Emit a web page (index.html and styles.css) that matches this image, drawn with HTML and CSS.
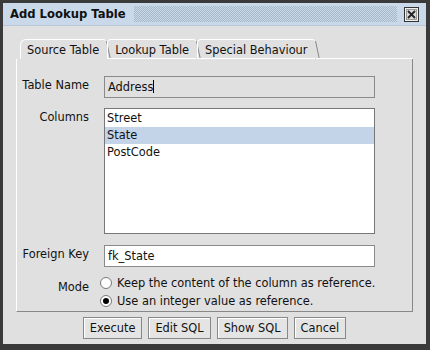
FILE: index.html
```html
<!DOCTYPE html>
<html>
<head>
<meta charset="utf-8">
<link rel="stylesheet" href="styles.css">
</head>
<body>
<div class="window">
  <div class="titlebar">
    <span class="title">Add Lookup Table</span>
    <span class="dots"></span>
    <span class="close"><svg width="15" height="15" viewBox="0 0 15 15"><rect x="0.5" y="0.5" width="14" height="14" fill="#f0f0f0" stroke="#333"/><rect x="2.5" y="2.5" width="10" height="10" fill="#d8d8d8" stroke="#999"/><path d="M4 4 L11 11 M11 4 L4 11" stroke="#222" stroke-width="1.8"/></svg></span>
  </div>
  <div class="body">
    <div class="tabs">
      <div class="tab active">Source Table</div>
      <div class="tab">Lookup Table</div>
      <div class="tab">Special Behaviour</div>
      <div class="tabfill"></div>
    </div>
    <div class="panel">
      <div class="row">
        <label class="lbl">Table Name</label>
        <div class="field disabled">Address<span class="caret"></span></div>
      </div>
      <div class="row">
        <label class="lbl">Columns</label>
        <div class="list">
          <div class="item">Street</div>
          <div class="item sel">State</div>
          <div class="item">PostCode</div>
        </div>
      </div>
      <div class="row">
        <label class="lbl">Foreign Key</label>
        <div class="field">fk_State</div>
      </div>
      <div class="row mode">
        <label class="lbl">Mode</label>
        <div class="radios">
          <div class="radio"><span class="dot"></span>Keep the content of the column as reference.</div>
          <div class="radio"><span class="dot on"></span>Use an integer value as reference.</div>
        </div>
      </div>
    </div>
    <div class="buttons">
      <button class="btn">Execute</button>
      <button class="btn">Edit SQL</button>
      <button class="btn">Show SQL</button>
      <button class="btn">Cancel</button>
    </div>
  </div>
</div>
</body>
</html>
```
FILE: styles.css
```css
html, body { margin: 0; padding: 0; }
body { width: 430px; height: 350px; overflow: hidden; background: #3c3c3c; font-family: "DejaVu Sans", Verdana, sans-serif; font-size: 11.4px; color: #111; }
.window { box-sizing: border-box; width: 430px; height: 350px; border: 3px solid #3a3a3a; border-bottom-width: 6px; border-right-width: 4px; background: #e0e0e0; display: flex; flex-direction: column; }
.titlebar { height: 22px; background: #c9d9e9; display: flex; align-items: center; padding: 0 7px 0 7px; border-bottom: 1px solid #b8c8d8; }
.title { font-weight: bold; font-size: 11.6px; color: #111; white-space: nowrap; }
.dots { flex: 1; height: 16px; margin: 0 7px 0 8px; background: repeating-conic-gradient(#9fb0c2 0 25%, transparent 0 50%) 0 0 / 2px 2px; opacity: 0.8; }
.close { display: flex; width: 15px; height: 15px; }
.body { flex: 1; display: flex; flex-direction: column; padding: 14px 13px 0 13px; }
.tabs { display: flex; height: 19px; padding-left: 4px; align-items: flex-end; }
.tab { position: relative; height: 18px; padding: 0 7px 0 7px; border-top: 1px solid #fff; border-left: 1px solid #fff; border-bottom: 1px solid #fff; border-radius: 4px 3px 0 0; color: #111; line-height: 20px; margin-right: 1px; }
.tab::after { content: ""; position: absolute; right: -1px; top: 1px; width: 1px; height: 17px; background: #888; transform: skewX(12deg); transform-origin: top; }
.tab.active { border-bottom-color: #e0e0e0; border-left-color: #fff; border-radius: 6px 3px 0 0; padding-left: 6px; }
.tabfill { flex: 1; border-bottom: 1px solid #fff; height: 0; }
.panel { flex: 0 0 253px; min-height: 0; box-sizing: border-box; border-left: 1px solid #fff; border-right: 1px solid #888; border-bottom: 1px solid #888; padding: 17px 37px 0 0; display: flex; flex-direction: column; }
.row { display: flex; align-items: flex-start; }
.lbl { width: 72px; text-align: right; padding-right: 15px; flex: 0 0 72px; line-height: 14px; margin-top: 2px; white-space: nowrap; }
.field { flex: 1; height: 22px; box-sizing: border-box; border: 1px solid #8a8a8a; background: #fff; padding: 3px 3px; line-height: 14px; margin-bottom: 10px; }
.field.disabled { background: #e0e0e0; }
.caret { display: inline-block; width: 1px; height: 13px; background: #000; vertical-align: -2px; }
.list { flex: 1; height: 126px; box-sizing: border-box; border: 1px solid #777; background: #fff; padding-top: 1px; margin-bottom: 11px; }
.item { height: 17px; line-height: 17px; padding-left: 2px; }
.item.sel { background: #c4d4e8; }
.mode { margin-top: -3px; }
.mode .lbl { margin-top: 6px; }
.radios { display: flex; flex-direction: column; margin-left: -4px; }
.radio { display: flex; align-items: center; height: 18px; white-space: nowrap; }
.dot { flex: 0 0 12px; width: 12px; height: 12px; border-radius: 50%; border: 1px solid #777; background: #fff; margin-right: 5px; display: flex; align-items: center; justify-content: center; box-sizing: border-box; }
.dot.on::after { content: ""; width: 6px; height: 6px; border-radius: 50%; background: #000; }
.buttons { display: flex; justify-content: center; gap: 6px; padding-top: 5px; }
.btn { font-family: inherit; font-size: 11.4px; color: #111; background: #e4e4e4; border: 1px solid #888; box-shadow: inset 1px 1px 0 #fff; height: 22px; padding: 0 6px; margin: 0; }
```
